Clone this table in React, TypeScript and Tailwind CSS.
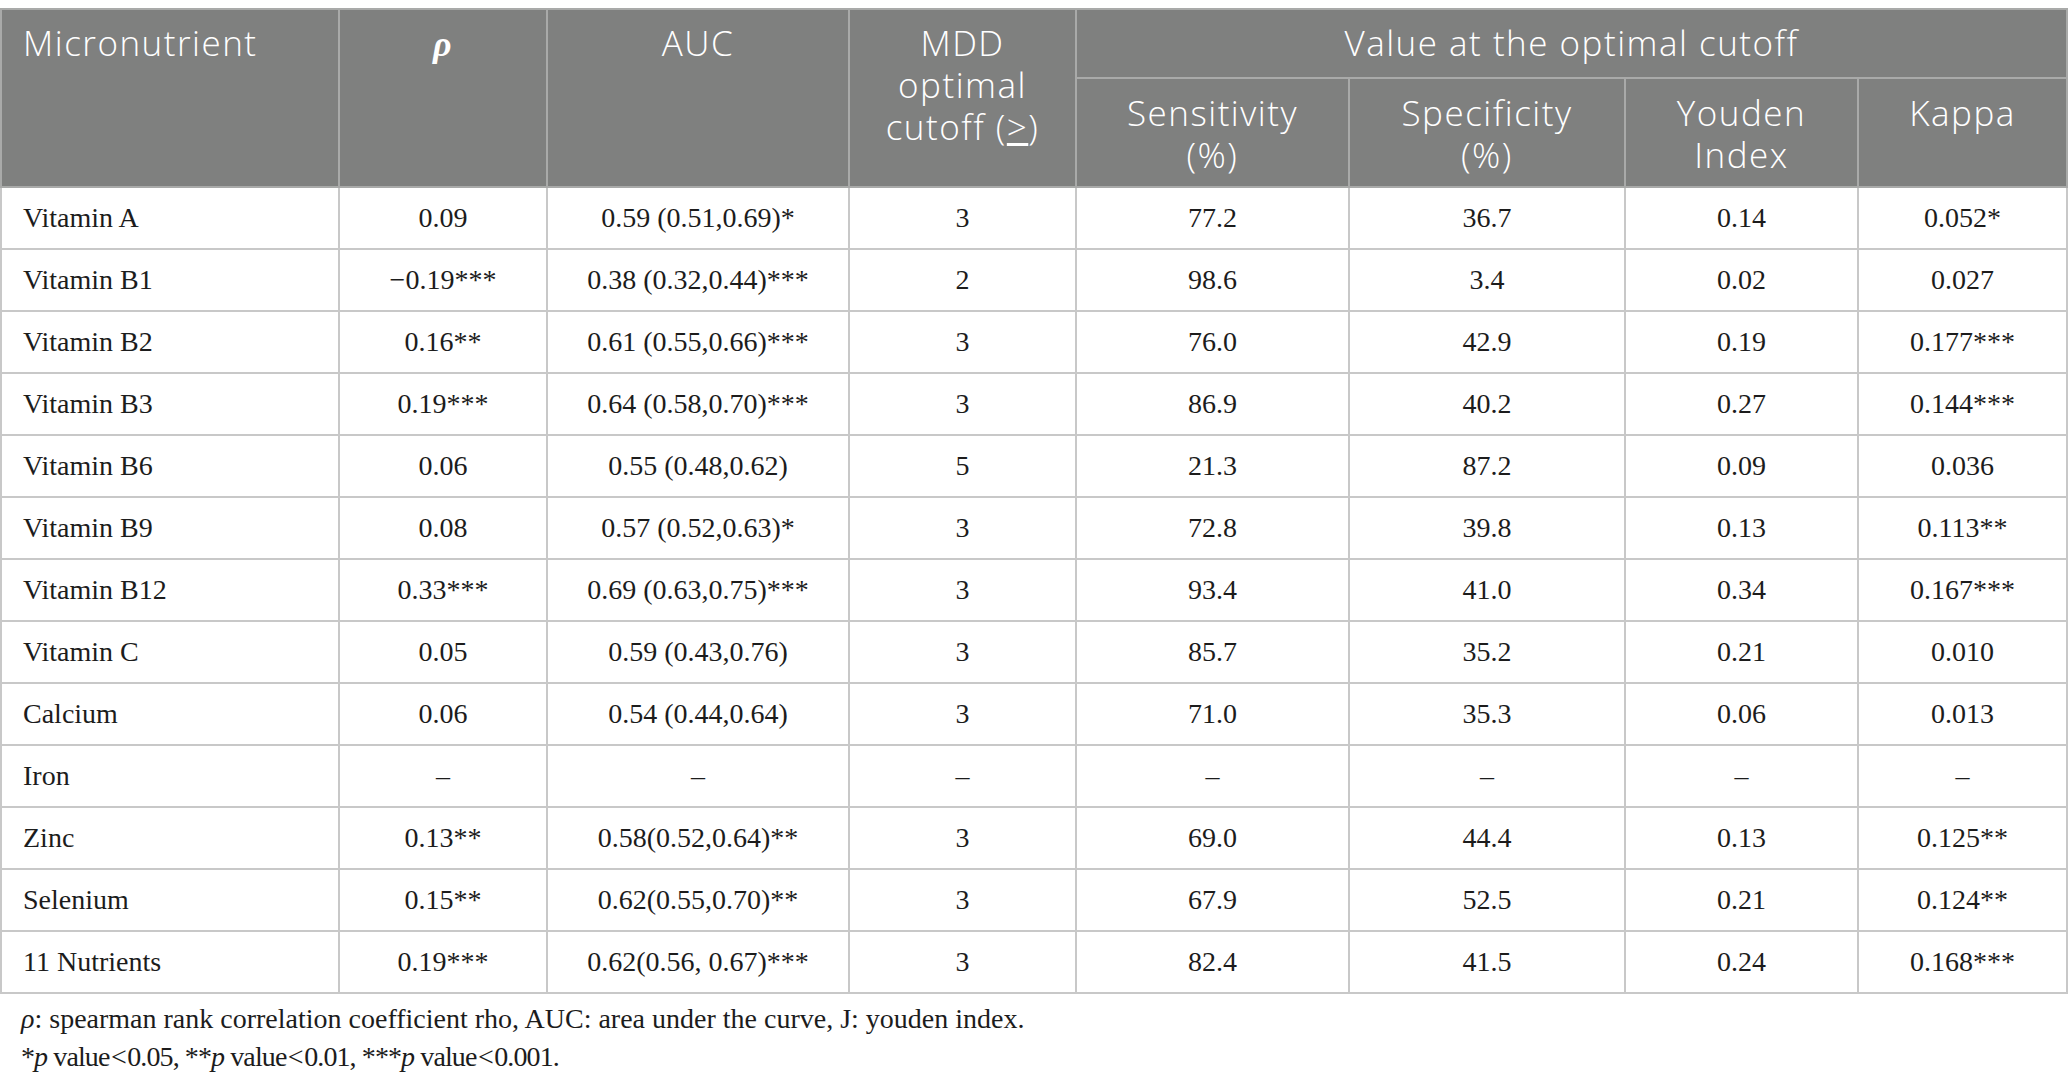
const rows: string[][] = [
  ["Vitamin A", "0.09", "0.59 (0.51,0.69)*", "3", "77.2", "36.7", "0.14", "0.052*"],
  ["Vitamin B1", "\u22120.19***", "0.38 (0.32,0.44)***", "2", "98.6", "3.4", "0.02", "0.027"],
  ["Vitamin B2", "0.16**", "0.61 (0.55,0.66)***", "3", "76.0", "42.9", "0.19", "0.177***"],
  ["Vitamin B3", "0.19***", "0.64 (0.58,0.70)***", "3", "86.9", "40.2", "0.27", "0.144***"],
  ["Vitamin B6", "0.06", "0.55 (0.48,0.62)", "5", "21.3", "87.2", "0.09", "0.036"],
  ["Vitamin B9", "0.08", "0.57 (0.52,0.63)*", "3", "72.8", "39.8", "0.13", "0.113**"],
  ["Vitamin B12", "0.33***", "0.69 (0.63,0.75)***", "3", "93.4", "41.0", "0.34", "0.167***"],
  ["Vitamin C", "0.05", "0.59 (0.43,0.76)", "3", "85.7", "35.2", "0.21", "0.010"],
  ["Calcium", "0.06", "0.54 (0.44,0.64)", "3", "71.0", "35.3", "0.06", "0.013"],
  ["Iron", "\u2013", "\u2013", "\u2013", "\u2013", "\u2013", "\u2013", "\u2013"],
  ["Zinc", "0.13**", "0.58(0.52,0.64)**", "3", "69.0", "44.4", "0.13", "0.125**"],
  ["Selenium", "0.15**", "0.62(0.55,0.70)**", "3", "67.9", "52.5", "0.21", "0.124**"],
  ["11 Nutrients", "0.19***", "0.62(0.56, 0.67)***", "3", "82.4", "41.5", "0.24", "0.168***"],
];

const widths = [338, 208, 302, 227, 273, 276, 233, 209];

const th =
  "border-2 border-[#a9aaa9] align-top px-3 font-light text-white text-[35px] leading-[42px] tracking-[1.5px] font-['Open_Sans',sans-serif]";

const lt = "\u200a<\u200a";

export default function App() {
  return (
    <div className="min-h-screen bg-white pt-[8px]">
      <table className="table-fixed border-collapse w-[2067px] border-2 border-[#c4c4c4]">
        <colgroup>
          {widths.map((w, i) => (
            <col key={i} style={{ width: w }} />
          ))}
        </colgroup>
        <thead className="bg-[#7f807f]">
          <tr className="h-[69px]">
            <th rowSpan={2} className={`${th} text-left pl-[21px] pt-[12px]`}>
              Micronutrient
            </th>
            <th rowSpan={2} className={`${th} text-center pt-[12px]`}>
              <span className="font-['Liberation_Serif',serif] italic font-semibold text-[36px]">ρ</span>
            </th>
            <th rowSpan={2} className={`${th} text-center pt-[12px]`}>
              AUC
            </th>
            <th rowSpan={2} className={`${th} text-center pt-[12px]`}>
              MDD optimal cutoff (<span className="underline underline-offset-[3px]">&gt;</span>)
            </th>
            <th colSpan={4} className={`${th} text-center pt-[12px]`}>
              Value at the optimal cutoff
            </th>
          </tr>
          <tr className="h-[109px]">
            <th className={`${th} text-center pt-[13px]`}>
              Sensitivity
              <br />
              (%)
            </th>
            <th className={`${th} text-center pt-[13px]`}>
              Specificity
              <br />
              (%)
            </th>
            <th className={`${th} text-center pt-[13px]`}>
              Youden
              <br />
              Index
            </th>
            <th className={`${th} text-center pt-[13px]`}>Kappa</th>
          </tr>
        </thead>
        <tbody className="font-['Liberation_Serif',serif] text-[28px] text-[#1c1c1c]">
          {rows.map((r) => (
            <tr key={r[0]} className="h-[62px]">
              {r.map((c, i) => (
                <td
                  key={i}
                  className={`border-2 border-[#c8c8c8] ${i === 0 ? "text-left pl-[21px]" : "text-center"}`}
                >
                  {c}
                </td>
              ))}
            </tr>
          ))}
        </tbody>
      </table>
      <div className="pl-[21px] pt-[6px] font-['Liberation_Serif',serif] text-[28px] leading-[38px] text-[#1c1c1c]">
        <p>
          <i>ρ</i>: spearman rank correlation coefficient rho, AUC: area under the curve, J: youden index.
        </p>
        <p className="tracking-[-0.9px]">
          *<i>p</i> value{lt}0.05, **<i>p</i> value{lt}0.01, ***<i>p</i> value{lt}0.001.
        </p>
      </div>
    </div>
  );
}
